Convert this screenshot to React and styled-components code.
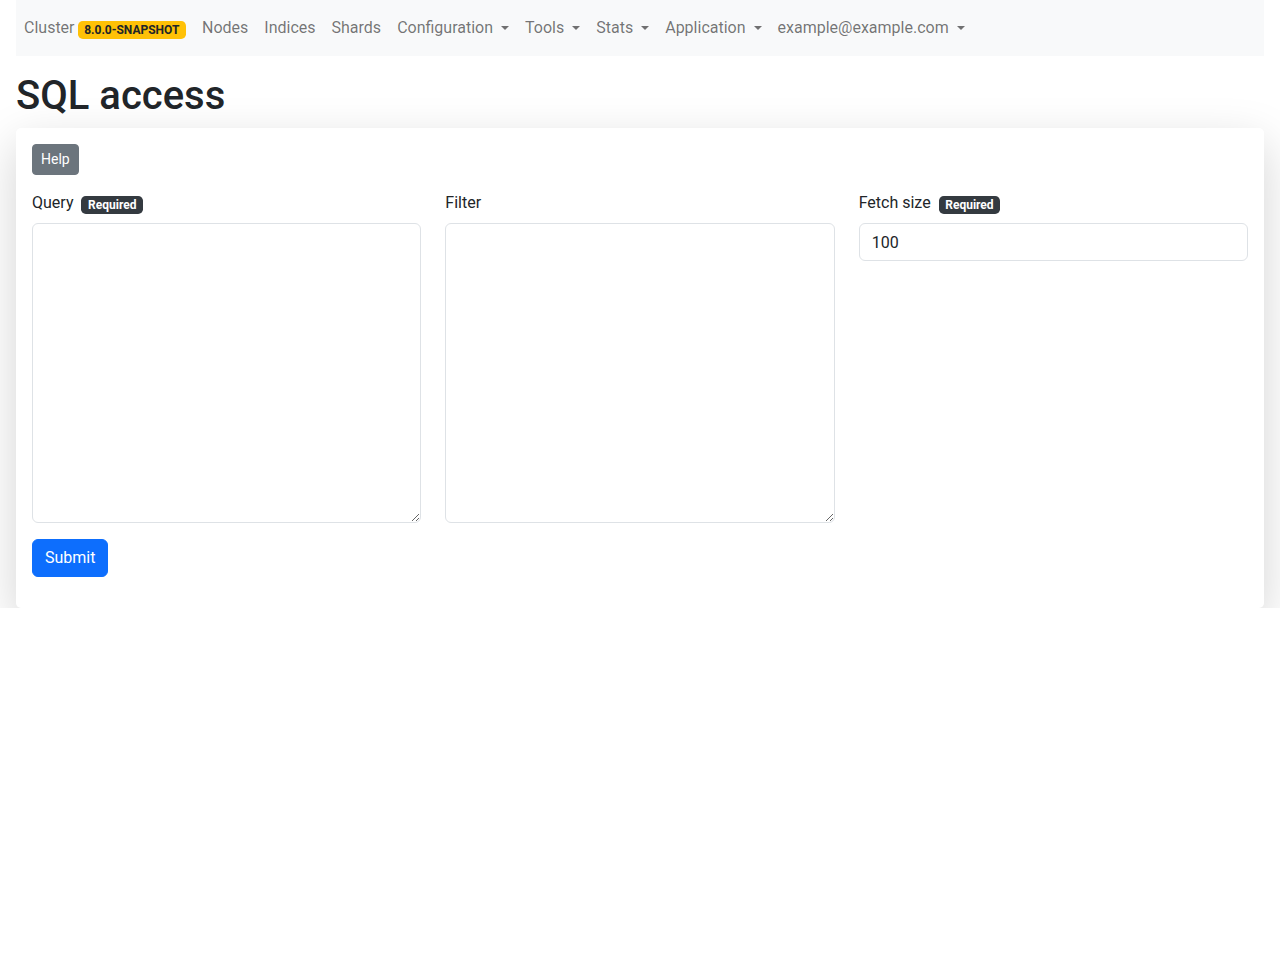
import styled, { createGlobalStyle } from 'styled-components';

const GlobalStyle = createGlobalStyle`
  body {
    margin: 0;
    font-family: Roboto, "Liberation Sans", sans-serif;
    font-size: 16px;
    line-height: 1.5;
    color: #212529;
    background: #fff;
  }
  * { box-sizing: border-box; }
`;

const Page = styled.div`
  padding: 0 16px;
`;

const Navbar = styled.nav`
  display: flex;
  align-items: center;
  background: #f8f9fa;
  padding: 8px 0;
  margin-bottom: 16px;
`;

const NavLink = styled.a`
  display: inline-flex;
  align-items: center;
  padding: 8px;
  color: rgba(0, 0, 0, 0.55);
  text-decoration: none;
  line-height: 24px;
  cursor: pointer;
  ${({ $toggle }) =>
    $toggle &&
    `
    &::after {
      content: '';
      display: inline-block;
      margin-left: 8px;
      border-top: 0.3em solid;
      border-right: 0.3em solid transparent;
      border-left: 0.3em solid transparent;
      border-bottom: 0;
    }
  `}
`;

const Badge = styled.span`
  display: inline-block;
  padding: 0.27em 0.55em;
  margin-top: 4px;
  font-size: 0.75em;
  font-weight: 700;
  line-height: 1;
  border-radius: 0.3rem;
  margin-left: ${({ $ml }) => $ml || '3px'};
  background: ${({ $bg }) => $bg};
  color: ${({ $fg }) => $fg};
`;

const Title = styled.h1`
  font-size: 40px;
  font-weight: 500;
  line-height: 1.2;
  margin: 0 0 8px;
`;

const Card = styled.div`
  background: #fff;
  border-radius: 5px;
  box-shadow: 0 16px 48px rgba(0, 0, 0, 0.175);
  padding: 16px 16px 31px;
`;

const Button = styled.button`
  display: inline-block;
  border: 1px solid ${({ $bg }) => $bg};
  background: ${({ $bg }) => $bg};
  color: #fff;
  font-family: inherit;
  font-size: ${({ $sm }) => ($sm ? '14px' : '16px')};
  line-height: 1.5;
  padding: ${({ $sm }) => ($sm ? '4px 8px' : '6px 12px')};
  border-radius: ${({ $sm }) => ($sm ? '4px' : '6px')};
  cursor: pointer;
`;

const Fields = styled.div`
  display: grid;
  grid-template-columns: repeat(3, 1fr);
  gap: 24px;
  margin: 16px 0;
`;

const Field = styled.div`
  display: flex;
  flex-direction: column;
`;

const Label = styled.label`
  display: flex;
  align-items: center;
  margin-bottom: 8px;
  line-height: 24px;
`;

const TextArea = styled.textarea`
  display: block;
  width: 100%;
  height: 300px;
  border: 1px solid #dee2e6;
  border-radius: 6px;
  padding: 6px 12px;
  font-family: inherit;
  font-size: 16px;
  resize: vertical;
`;

const Input = styled.input`
  display: block;
  width: 100%;
  height: 38px;
  border: 1px solid #dee2e6;
  border-radius: 6px;
  padding: 6px 12px;
  font-family: inherit;
  font-size: 16px;
  color: #212529;
`;

const App = () => (
  <Page>
    <GlobalStyle />
    <Navbar>
      <NavLink>
        Cluster
        <Badge $bg="#ffc107" $fg="#212529">8.0.0-SNAPSHOT</Badge>
      </NavLink>
      <NavLink>Nodes</NavLink>
      <NavLink>Indices</NavLink>
      <NavLink>Shards</NavLink>
      <NavLink $toggle>Configuration</NavLink>
      <NavLink $toggle>Tools</NavLink>
      <NavLink $toggle>Stats</NavLink>
      <NavLink $toggle>Application</NavLink>
      <NavLink $toggle>example@example.com</NavLink>
    </Navbar>
    <Title>SQL access</Title>
    <Card>
      <Button $sm $bg="#6c757d">Help</Button>
      <Fields>
        <Field>
          <Label>
            Query
            <Badge $bg="#343a40" $fg="#fff" $ml="8px">Required</Badge>
          </Label>
          <TextArea />
        </Field>
        <Field>
          <Label>Filter</Label>
          <TextArea />
        </Field>
        <Field>
          <Label>
            Fetch size
            <Badge $bg="#343a40" $fg="#fff" $ml="8px">Required</Badge>
          </Label>
          <Input defaultValue="100" />
        </Field>
      </Fields>
      <Button $bg="#0d6efd">Submit</Button>
    </Card>
  </Page>
);

export default App;
